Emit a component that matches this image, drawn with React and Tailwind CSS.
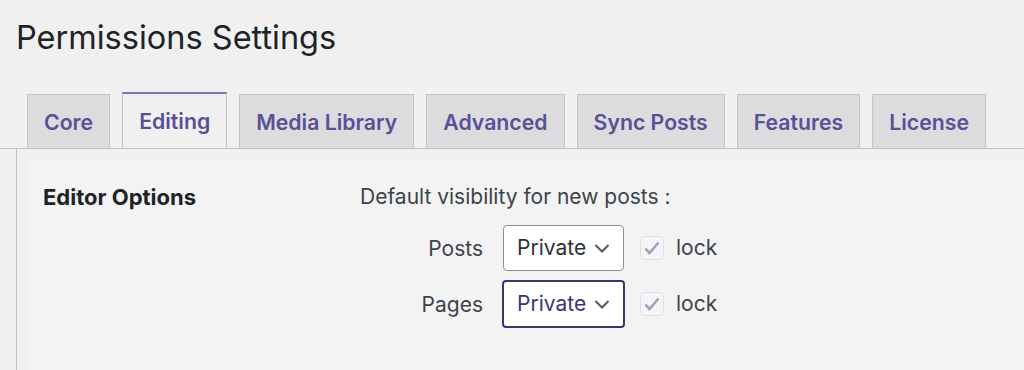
export default function App() {
  const tabs = ["Core", "Editing", "Media Library", "Advanced", "Sync Posts", "Features", "License"];
  return (
    <div className="w-[1024px] h-[370px] overflow-hidden bg-[#f0f0f1] text-[#1d2327]" style={{ fontFamily: "Inter, 'Noto Sans', sans-serif" }}>
      <h1 className="pl-[16px] pt-[16px] text-[32.5px] leading-[44px] font-normal">Permissions Settings</h1>
      <div className="flex items-end pl-[27px] mt-[34px] gap-[12px] h-[55px] border-b border-[#c3c4c7]">
        {tabs.map((t) => (
          <div
            key={t}
            className={
              t === "Editing"
                ? "h-[56px] flex items-center px-[16px] pt-[2px] text-[21.25px] font-semibold text-[#5b4f98] bg-[#f0f0f1] border border-[#c3c4c7] border-b-0 border-t-2 border-t-[#7d74b8]"
                : "h-[54px] flex items-center px-[16px] pt-[2px] text-[21.25px] font-semibold text-[#5b4f98] bg-[#dcdcde] border border-[#c3c4c7] border-b-0"
            }
          >
            {t}
          </div>
        ))}
      </div>
      <div className="ml-[16px] border-l border-[#c3c4c7] pl-[10px] pt-[11px]">
        <div className="bg-[#f3f3f3] h-[220px] flex pt-[23px]">
          <div className="w-[333px] pl-[16px] text-[22px] font-bold text-[#1d2327] leading-[28px]">Editor Options</div>
          <div className="flex flex-col text-[21px] text-[#3c434a]">
            <div className="leading-[28px]">Default visibility for new posts :</div>
            <div className="flex flex-col gap-[9px] mt-[14px]">
              {[["Posts", false], ["Pages", true]].map(([label, focused]) => (
                <div key={label} className="flex items-center">
                  <div className="w-[143px] text-right pr-[20px] pt-[2px]">{label}</div>
                  <div
                    className={
                      focused
                        ? "w-[123px] h-[48px] -ml-px rounded-[4px] border-2 border-[#3a3671] bg-white flex items-center pl-[13px] text-[#3a3671]"
                        : "w-[121px] h-[46px] rounded-[4px] border border-[#8c8f94] bg-white flex items-center pl-[13px] text-[#2c3338]"
                    }
                  >
                    <span>Private</span>
                    <svg width="18" height="18" viewBox="0 0 18 18" className="ml-[7px]">
                      <path d="M2.5 6l6.5 6.5L15.5 6" fill="none" stroke="#50575e" strokeWidth="2" />
                    </svg>
                  </div>
                  <div className={(focused ? "ml-[15px]" : "ml-[16px]") + " w-[24px] h-[24px] rounded-[4px] border border-[#e2e2e6] bg-[#f5f5f7] flex items-center justify-center"}>
                    <svg width="18" height="18" viewBox="0 0 18 18">
                      <path d="M2.5 9.5l4 4.5L15.5 3.5" fill="none" stroke="#a59fc6" strokeWidth="2.6" />
                    </svg>
                  </div>
                  <span className="ml-[12px]">lock</span>
                </div>
              ))}
            </div>
          </div>
        </div>
      </div>
    </div>
  );
}
